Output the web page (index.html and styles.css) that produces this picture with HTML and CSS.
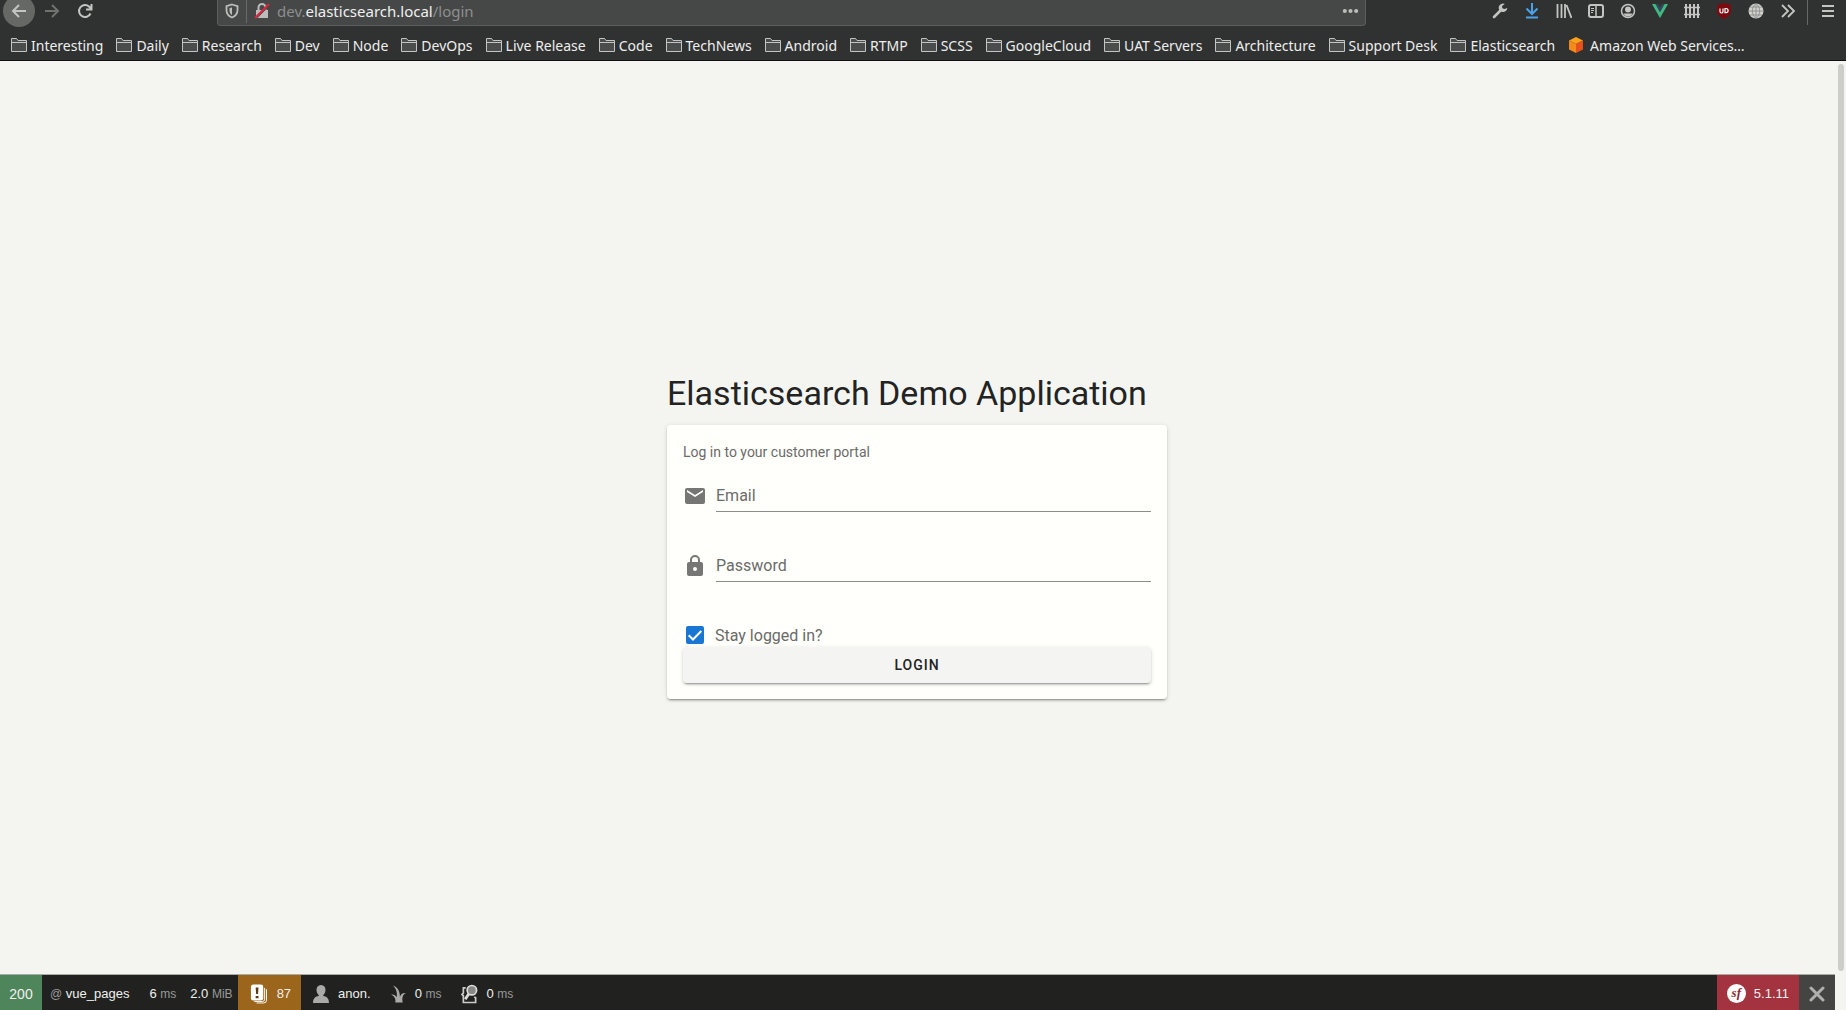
FILE: index.html
```html
<!DOCTYPE html>
<html lang="en">
<head>
<meta charset="utf-8">
<title>Elasticsearch Demo Application</title>
<link rel="stylesheet" href="styles.css">
</head>
<body>
<svg class="defs" aria-hidden="true">
  <symbol id="folder" viewBox="0 0 16 14">
    <path d="M.5 13.500V.5h5l1.500 2h8.500v11z" fill="#4b4d4c" stroke="#c4c4c2"/>
    <path d="M1 4.500h14.500" stroke="#c4c4c2"/>
  </symbol>
</svg>
<header class="browser">
  <div class="navbar">
    <div class="nav-buttons">
      <button class="back" aria-label="Back"><svg viewBox="0 0 16 16"><path d="M15 8H2M8 2L2 8l6 6"/></svg></button>
      <button class="forward" aria-label="Forward"><svg viewBox="0 0 16 16"><path d="M1 8h13M8 2l6 6-6 6"/></svg></button>
      <button class="reload" aria-label="Reload"><svg viewBox="0 0 16 16"><path d="M13.500 10.500A6 6 0 1 1 12 3.500l2 2M14.500 1v5.500H9"/></svg></button>
    </div>
    <div class="urlbar">
      <svg class="shield" viewBox="0 0 14 16"><path d="M7 1.500l5.500 1.700v4C12.500 10.500 10.500 13 7 14.500 3.500 13 1.500 10.500 1.500 7.200v-4z" fill="none" stroke="#bcbcba" stroke-width="1.800"/><path d="M7 4.500v7.500C5.500 11 4.500 9.500 4.500 7.500V5z" fill="#bcbcba"/></svg>
      <span class="rule"></span>
      <svg class="insecure" viewBox="0 0 16 16"><path d="M4.500 8V4.500a3.500 3.500 0 0 1 7 0V8" fill="none" stroke="#bcbcba" stroke-width="2"/><path d="M2 7h12v8H2z" fill="#bcbcba"/><path d="M3 14.500L15 2.500" stroke="#464847" stroke-width="1.500"/><path d="M1 15L15 1" stroke="#e0223c" stroke-width="2"/></svg>
      <span class="url">dev.<b>elasticsearch.local</b>/login</span>
      <button class="more" aria-label="Page actions"><svg viewBox="0 0 18 6"><circle cx="3" cy="3" r="2.200"/><circle cx="9" cy="3" r="2.200"/><circle cx="15" cy="3" r="2.200"/></svg></button>
    </div>
    <div class="tools">
      <button aria-label="Developer tools"><svg viewBox="0 0 16 16"><path d="M2 14L9 7" stroke="#c4c4c2" stroke-width="2.600" stroke-linecap="round"/><path d="M12.800.9a4.300 4.300 0 1 0 2.500 4L12.500 6 10.300 5.200 10 3z" fill="#c4c4c2"/></svg></button>
      <button aria-label="Downloads"><svg viewBox="0 0 16 16" fill="none" stroke="#4ba2ea" stroke-width="2"><path d="M8 0v10M2.500 5.500L8 11l5.500-5.500M2 14.500h12"/></svg></button>
      <button aria-label="Library"><svg viewBox="0 0 16 16" fill="none" stroke="#c4c4c2" stroke-width="1.800"><path d="M1.500 1v14M5.500 1v14M9 1v14M10.500 2l5 13"/></svg></button>
      <button aria-label="Sidebars"><svg viewBox="0 0 16 16" fill="none" stroke="#c4c4c2"><rect x="1" y="2" width="14" height="12" rx="2" stroke-width="2"/><path d="M8 2v12" stroke-width="1.500"/><path d="M3 5.500h3M3 7.500h3M3 9.500h2"/></svg></button>
      <button aria-label="Account"><svg viewBox="0 0 16 16"><circle cx="8" cy="8" r="6.500" fill="none" stroke="#c4c4c2" stroke-width="1.500"/><circle cx="8" cy="6.500" r="3" fill="#c4c4c2"/><path d="M3.500 10.500h9A5 5 0 0 1 8 13.500a5 5 0 0 1-4.500-3z" fill="#c4c4c2"/></svg></button>
      <button aria-label="Vue.js devtools"><svg viewBox="0 0 16 16"><path d="M0 1h3.500L8 9l4.500-8H16L8 15z" fill="#41b883"/><path d="M3.500 1H6l2 3.500L10 1h2.500L8 9z" fill="#34495e"/></svg></button>
      <button aria-label="Containers"><svg viewBox="0 0 16 16" fill="none" stroke="#c4c4c2" stroke-width="2"><path d="M2 1v14M6 1v14M10 1v14M14 1v14"/><path d="M0 4.500h16M0 11.500h16" stroke-width="1.500"/></svg></button>
      <button aria-label="uBlock"><svg viewBox="0 0 16 16"><path d="M8 0l7 2v6c0 3.500-3 6-7 8-4-2-7-4.500-7-8V2z" fill="#7c0b10"/><path d="M4 5.500v3a1.200 1.200 0 0 0 3 0v-3M9 5.500v4.200h1a2.100 2.100 0 0 0 0-4.200z" fill="none" stroke="#fff" stroke-width="1.200"/></svg></button>
      <button aria-label="Translate"><svg viewBox="0 0 16 16"><circle cx="8" cy="8" r="7.500" fill="#d0d0ce"/><path d="M8 .5v15M.5 8h15M2 4h12M2 12h12M8 .5c-5 4-5 11 0 15 5-4 5-11 0-15" fill="none" stroke="#80817f" stroke-width=".7"/></svg></button>
      <button aria-label="More tools"><svg viewBox="0 0 16 16" fill="none" stroke="#c4c4c2" stroke-width="1.800"><path d="M2 2l6 6-6 6M8 2l6 6-6 6"/></svg></button>
      <span class="rule tall"></span>
      <button class="menu" aria-label="Menu"><svg viewBox="0 0 16 16" stroke="#c4c4c2" stroke-width="2"><path d="M2 3h12M2 8h12M2 13h12"/></svg></button>
    </div>
  </div>
  <nav class="bookmarks" aria-label="Bookmarks">
    <a href="#"><svg><use href="#folder"/></svg>Interesting</a>
    <a href="#"><svg><use href="#folder"/></svg>Daily</a>
    <a href="#"><svg><use href="#folder"/></svg>Research</a>
    <a href="#"><svg><use href="#folder"/></svg>Dev</a>
    <a href="#"><svg><use href="#folder"/></svg>Node</a>
    <a href="#"><svg><use href="#folder"/></svg>DevOps</a>
    <a href="#"><svg><use href="#folder"/></svg>Live Release</a>
    <a href="#"><svg><use href="#folder"/></svg>Code</a>
    <a href="#"><svg><use href="#folder"/></svg>TechNews</a>
    <a href="#"><svg><use href="#folder"/></svg>Android</a>
    <a href="#"><svg><use href="#folder"/></svg>RTMP</a>
    <a href="#"><svg><use href="#folder"/></svg>SCSS</a>
    <a href="#"><svg><use href="#folder"/></svg>GoogleCloud</a>
    <a href="#"><svg><use href="#folder"/></svg>UAT Servers</a>
    <a href="#"><svg><use href="#folder"/></svg>Architecture</a>
    <a href="#"><svg><use href="#folder"/></svg>Support Desk</a>
    <a href="#"><svg><use href="#folder"/></svg>Elasticsearch</a>
    <a class="site" href="#"><svg viewBox="0 0 16 16"><path d="M8 0l7 3.500L8 7 1 3.500z" fill="#f9a11b"/><path d="M1 3.500L8 7v9l-7-3.500z" fill="#f58a1c"/><path d="M15 3.500L8 7v9l7-3.500z" fill="#e8501c"/></svg>Amazon Web Services…</a>
  </nav>
</header>
<div class="viewport">
  <main class="page">
    <form class="login">
      <h1>Elasticsearch Demo Application</h1>
      <div class="card">
        <p class="intro">Log in to your customer portal</p>
        <div class="field">
          <label for="email" aria-label="Email"><svg viewBox="0 0 24 24"><path d="M20 8l-8 5-8-5V6l8 5 8-5m0-2H4c-1.110 0-2 .89-2 2v12a2 2 0 0 0 2 2h16a2 2 0 0 0 2-2V6a2 2 0 0 0-2-2z"/></svg></label>
          <input id="email" type="email" placeholder="Email">
        </div>
        <div class="field">
          <label for="password" aria-label="Password"><svg viewBox="0 0 24 24"><path d="M12 17a2 2 0 0 0 2-2 2 2 0 0 0-2-2 2 2 0 0 0-2 2 2 2 0 0 0 2 2m6-9a2 2 0 0 1 2 2v10a2 2 0 0 1-2 2H6a2 2 0 0 1-2-2V10a2 2 0 0 1 2-2h1V6a5 5 0 0 1 10 0v2h1m-6-5a3 3 0 0 0-3 3v2h6V6a3 3 0 0 0-3-3z"/></svg></label>
          <input id="password" type="password" placeholder="Password">
        </div>
        <label class="stay">
          <span class="tick">
            <input type="checkbox" checked>
            <svg viewBox="0 0 18 18"><path d="M2.700 9.200l4.300 4.300L15.300 5"/></svg>
          </span>
          Stay logged in?
        </label>
        <button class="submit" type="submit">LOGIN</button>
      </div>
    </form>
    <footer class="debugbar">
      <a class="status" href="#">200</a>
      <a class="route" href="#"><i>@</i> vue_pages</a>
      <a class="time" href="#">6 <i>ms</i></a>
      <a class="memory" href="#">2.0 <i>MiB</i></a>
      <a class="logs" href="#"><svg viewBox="0 0 18 20"><path d="M15.500 3.500v12a2.500 2.500 0 0 1-2.500 2.500H4.500M17.500 5v11.500a3 3 0 0 1-3 3H7" fill="none" stroke="#fff"/><rect x="1" width="13" height="17" rx="2.500" fill="#fff"/><path d="M6 3h3l-.5 7h-2zM6 12h3v2.500H6z" fill="#5c3c12"/></svg>87</a>
      <a class="user" href="#"><svg viewBox="0 0 16 18"><path d="M8 0c3 0 4.500 2.200 4.500 5 0 2-1 4-2.200 5v1c3 .5 5.700 2 5.700 7H0c0-5 2.700-6.500 5.700-7v-1C4.500 9 3.500 7 3.500 5 3.500 2.200 5 0 8 0z" fill="#aaa"/></svg>anon.</a>
      <a class="twig" href="#"><svg viewBox="0 0 16 18"><path d="M4.500 18C5.500 15 4 11 0 9.500c3-.5 5 1 6 3C7 8 5.500 3 2 0c5 1.500 7.500 6 7.500 12C10.500 9 12.500 7.500 16 8c-3.500 1.500-4.500 5-3.500 10z" fill="#aaa"/></svg><span>0 <i>ms</i></span></a>
      <a class="search" href="#"><svg viewBox="0 0 18 20"><path d="M5 3.500H2.500V9L1 10.500 2.500 12v7h13v-5l-1.500-1" fill="none" stroke="#ccc" stroke-width="1.800"/><path d="M8.500 9.500l-4 6" stroke="#ddd" stroke-width="3"/><circle cx="11.500" cy="6" r="5" fill="#888" stroke="#ddd" stroke-width="1.800"/></svg><span>0 <i>ms</i></span></a>
      <a class="version" href="#"><span class="sf">sf</span>5.1.11</a>
      <button class="close" type="button" aria-label="Close toolbar"><svg viewBox="0 0 16 16"><path d="M2 2l12 12M14 2L2 14"/></svg></button>
    </footer>
  </main>
  <div class="scroll"><span></span></div>
</div>
</body>
</html>
```
FILE: styles.css
```css
* { box-sizing: border-box; }
body { margin: 0; min-height: 100vh; display: flex; flex-direction: column; font-family: Roboto, sans-serif; background: #f4f5f1; }
button { border: 0; padding: 0; background: none; color: inherit; font: inherit; }
a { color: inherit; text-decoration: none; }
svg { display: block; flex: none; }
i { font-style: normal; }
.defs { position: absolute; width: 0; height: 0; }

/* Browser toolbar */
.browser { background: #303231; border-bottom: 1px solid #111; font-family: "Noto Sans", sans-serif; color: #eee; }
.navbar { height: 30px; display: flex; align-items: flex-start; }
.nav-buttons { width: 217px; display: flex; align-items: center; height: 22px; padding-left: 3px; gap: 17px; }
.nav-buttons svg { width: 16px; height: 16px; fill: none; stroke: #c4c4c2; stroke-width: 2; }
.back { width: 32px; height: 32px; border-radius: 50%; background: #666866; display: grid; place-items: center; margin-right: -8px; }
.nav-buttons .forward svg { stroke: #707270; }
.urlbar { flex: 0 1 1149px; height: 26px; display: flex; align-items: center; padding: 0 6px 4px 7px; background: #464847; border: 1px solid #5c5e5d; border-top: 0; border-radius: 0 0 4px 4px; font-size: 15px; color: #8d8f8e; }
.urlbar b { font-weight: 400; color: #f0f0f0; }
.shield { width: 14px; height: 16px; }
.rule { width: 1px; height: 24px; background: #686a69; margin: 0 7px; }
.insecure { width: 16px; height: 16px; margin-right: 7px; }
.url { flex: 1; }
.more svg { width: 17px; height: 6px; fill: #bcbcba; }
.tools { flex: 1; display: flex; justify-content: flex-end; align-items: center; height: 22px; gap: 16px; padding-right: 10px; }
.tools svg { width: 16px; height: 16px; }
.rule.tall { height: 28px; margin: 0 -4px 0 -5px; }
.bookmarks { height: 30px; display: flex; align-items: center; gap: 13px; padding-left: 11px; font-size: 14px; white-space: nowrap; }
.bookmarks a { display: flex; align-items: center; gap: 4px; }
.bookmarks svg { width: 16px; height: 14px; }
.bookmarks .site { gap: 6px; }
.bookmarks .site svg { height: 16px; }

/* Login page */
.viewport { flex: 1; display: flex; }
.page { flex: 1; position: relative; display: grid; place-items: center; padding-right: 1px; }
.login { width: 500px; color: #232323; }
h1 { margin: 0; padding-bottom: 12px; font-size: 34px; line-height: 40px; font-weight: 400; white-space: nowrap; }
.card { padding: 16px; background: #fffffc; border-radius: 4px; box-shadow: 0 3px 1px -2px rgba(0,0,0,.2), 0 2px 2px rgba(0,0,0,.14), 0 1px 5px rgba(0,0,0,.12); color: #6b6b69; }
.intro { margin: 0; font-size: 14px; line-height: 22px; }
.field { display: flex; align-items: center; gap: 9px; height: 70px; padding: 17px 0 21px; }
.field svg { width: 24px; height: 24px; fill: #767674; }
.field input { flex: 1; min-width: 0; height: 32px; padding: 0; border: 0; border-bottom: 1px solid #8c8c8a; background: none; font: 16px/20px Roboto, sans-serif; color: #222; }
.field input::placeholder { color: #6b6b69; opacity: 1; }
.stay { display: flex; align-items: center; gap: 11px; height: 44px; padding-top: 21px; font-size: 16px; }
.tick { display: grid; margin-left: 3px; }
.tick input, .tick svg { grid-area: 1 / 1; width: 18px; height: 18px; margin: 0; }
.tick input { appearance: none; border: 2px solid #6b6b69; border-radius: 2px; }
.tick input:checked { border-color: #1976d2; background: #1976d2; }
.tick svg { fill: none; stroke: #fff; stroke-width: 2; pointer-events: none; }
.submit { display: block; width: 100%; height: 36px; border-radius: 4px; background: #f4f5f2; color: #222; font-size: 14px; font-weight: 500; letter-spacing: 1px; box-shadow: 0 3px 1px -2px rgba(0,0,0,.2), 0 2px 2px rgba(0,0,0,.14), 0 1px 5px rgba(0,0,0,.12); }

/* Debug toolbar */
.debugbar { position: absolute; left: 0; right: 0; bottom: 0; display: flex; align-items: stretch; height: 36px; border-top: 1px solid #a9aca6; background: #21221f; color: #f0f0f0; font: 13px "Liberation Sans", sans-serif; white-space: pre; }
.debugbar a { display: flex; align-items: center; padding: 2px 10px 0; }
.debugbar i { color: #999; font-size: 12px; }
.debugbar .status { width: 42px; padding-inline: 0; justify-content: center; background: #4f855a; font-size: 14px; }
.debugbar .route { padding-inline: 8px 10px; }
.debugbar .time { padding-inline: 10px 8px; }
.debugbar .memory { padding-inline: 6px 5px; }
.debugbar .logs { gap: 10px; padding-inline: 12px 10px; background: #9c651c; }
.logs svg, .search svg { width: 17px; height: 20px; }
.user, .twig { gap: 9px; }
.debugbar .user { padding-left: 12px; }
.user svg { width: 16px; height: 18px; }
.twig svg { width: 15px; height: 18px; }
.search { gap: 8px; }
.version { margin-left: auto; gap: 8px; background: #a3333e; }
.sf { width: 19px; height: 19px; border-radius: 50%; background: #fff; color: #8d2932; font: italic bold 13px/17px "Liberation Serif", serif; text-align: center; }
.close { width: 36px; display: grid; place-items: center; padding-top: 2px; background: #444442; }
.close svg { width: 16px; height: 16px; stroke: #b0b0ae; stroke-width: 3; stroke-linecap: round; }
.scroll { width: 11px; padding: 3px 3px 39px; display: flex; }
.scroll span { width: 6px; flex: none; border-radius: 3px; background: #cdcdca; }
```
